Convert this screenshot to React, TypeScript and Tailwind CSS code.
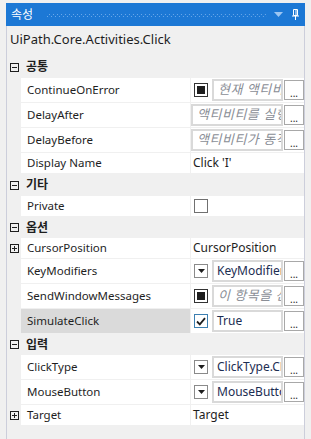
import React from "react";

type Check = "mixed" | "checked" | "empty";

type Prop = {
  name: string;
  kind: "checkText" | "text" | "plain" | "checkbox" | "drop";
  value?: string;
  placeholder?: string;
  check?: Check;
  expander?: boolean;
  selected?: boolean;
};

type Group = { title: string; h: string; props: Prop[] };

const groups: Group[] = [
  {
    title: "공통",
    h: "h-[22px]",
    props: [
      { name: "ContinueOnError", kind: "checkText", check: "mixed", placeholder: "현재 액티비티가 실패해도" },
      { name: "DelayAfter", kind: "text", placeholder: "액티비티를 실행한 후 지연 시간" },
      { name: "DelayBefore", kind: "text", placeholder: "액티비티가 동작을 시작하기 전" },
      { name: "Display Name", kind: "plain", value: "Click 'I'" },
    ],
  },
  {
    title: "기타",
    h: "h-[22px]",
    props: [{ name: "Private", kind: "checkbox", check: "empty" }],
  },
  {
    title: "옵션",
    h: "h-[21px]",
    props: [
      { name: "CursorPosition", kind: "plain", value: "CursorPosition", expander: true },
      { name: "KeyModifiers", kind: "drop", value: "KeyModifiers" },
      { name: "SendWindowMessages", kind: "checkText", check: "mixed", placeholder: "이 항목을 선택하면" },
      { name: "SimulateClick", kind: "checkText", check: "checked", value: "True", selected: true },
    ],
  },
  {
    title: "입력",
    h: "h-[21px]",
    props: [
      { name: "ClickType", kind: "drop", value: "ClickType.CLICK_SINGLE" },
      { name: "MouseButton", kind: "drop", value: "MouseButton.BTN_LEFT" },
      { name: "Target", kind: "plain", value: "Target", expander: true },
    ],
  },
];

function BoxIcon({ plus }: { plus?: boolean }) {
  return (
    <svg width="9" height="9" viewBox="0 0 9 9" className="block">
      <rect x="0.5" y="0.5" width="8" height="8" fill="none" stroke="#1e1e1e" />
      <line x1="2" y1="4.5" x2="7" y2="4.5" stroke="#1e1e1e" />
      {plus && <line x1="4.5" y1="2" x2="4.5" y2="7" stroke="#1e1e1e" />}
    </svg>
  );
}

function CheckBox({ state }: { state: Check }) {
  return (
    <div
      className={
        "flex h-[14px] w-[14px] shrink-0 items-center justify-center border bg-white " +
        (state === "checked" ? "border-[#3c7fb1]" : state === "mixed" ? "border-[#333333]" : "border-[#707070]")
      }
    >
      {state === "mixed" && <div className="h-[8px] w-[8px] bg-[#1e1e1e]" />}
      {state === "checked" && (
        <svg width="10" height="9" viewBox="0 0 10 9">
          <path d="M1 4.5 L3.8 7.3 L9 1.2" fill="none" stroke="#1e1e1e" strokeWidth="1.8" />
        </svg>
      )}
    </div>
  );
}

function DropBtn() {
  return (
    <div className="flex h-[14px] w-[14px] shrink-0 items-center justify-center border border-[#8a8a8a] bg-white">
      <svg width="7" height="4" viewBox="0 0 7 4">
        <path d="M0 0 H7 L3.5 4 Z" fill="#1e1e1e" />
      </svg>
    </div>
  );
}

function TextBox({ value, placeholder, wide }: { value?: string; placeholder?: string; wide?: boolean }) {
  return (
    <div
      className={
        "flex h-[22px] items-center overflow-hidden whitespace-nowrap border-2 border-[#d9d9d9] bg-white pl-[3px] " +
        (wide ? "w-[92px]" : "w-[71px]")
      }
    >
      {value ? (
        <span className="text-[12px] text-[#1c2d52]">{value}</span>
      ) : (
        <span className="pl-[1px] text-[13px] italic tracking-[0.5px] text-[#8a8e96]">{placeholder}</span>
      )}
    </div>
  );
}

function Ellipsis() {
  return (
    <div className="ml-[1px] flex h-[20px] w-[20px] shrink-0 items-end justify-center border border-[#a8a8a8] bg-white pb-[1px] text-[10px] leading-[10px] text-[#1e1e1e]">
      ...
    </div>
  );
}

function Value({ p }: { p: Prop }) {
  if (p.kind === "plain") {
    return <span className="pl-[2px] text-[12px] text-[#1e1e1e]">{p.value}</span>;
  }
  if (p.kind === "checkbox") {
    return (
      <div className="pl-[3px]">
        <CheckBox state={p.check ?? "empty"} />
      </div>
    );
  }
  if (p.kind === "text") {
    return (
      <div className="flex items-center">
        <TextBox placeholder={p.placeholder} value={p.value} wide />
        <Ellipsis />
      </div>
    );
  }
  return (
    <div className="flex items-center pl-[3px]">
      {p.kind === "drop" ? <DropBtn /> : <CheckBox state={p.check ?? "empty"} />}
      <div className="ml-[4px]">
        <TextBox placeholder={p.placeholder} value={p.value} />
      </div>
      <Ellipsis />
    </div>
  );
}

function PropRow({ p }: { p: Prop }) {
  const tall = p.kind !== "plain" && p.kind !== "checkbox";
  return (
    <div className={"flex " + (tall ? "h-[25px]" : "h-[21px]")}>
      <div className="flex w-[14px] shrink-0 items-center justify-center">{p.expander && <BoxIcon plus />}</div>
      <div
        className={
          "flex w-[170px] shrink-0 items-center border-b border-r border-[#f0f0f0] pl-[6px] text-[11.5px] text-[#1e1e1e] " +
          (p.selected ? "bg-[#dadada]" : "bg-white")
        }
      >
        {p.name}
      </div>
      <div className="flex w-[113px] shrink-0 items-center border-b border-[#f0f0f0] bg-white">
        <Value p={p} />
      </div>
    </div>
  );
}

function CategoryRow({ title, h }: { title: string; h: string }) {
  return (
    <div className={"flex items-center " + h}>
      <div className="flex w-[14px] shrink-0 items-center justify-center">
        <BoxIcon />
      </div>
      <span className="pl-[5px] text-[12px] font-bold text-[#1e1e1e]">{title}</span>
    </div>
  );
}

export default function App() {
  return (
    <div className="h-[439px] w-[311px] overflow-hidden bg-[#f0f0f0] pt-[3px] font-['Noto_Sans','Noto_Sans_CJK_KR',sans-serif]">
      <div className="ml-[6px] w-[299px]">
        <div className="flex h-[23px] items-center bg-[#1c78d5] pl-[5px] pr-[6px]">
          <span className="text-[12px] text-white">속성</span>
          <svg className="ml-[14px] flex-1" height="6" viewBox="0 0 220 6" preserveAspectRatio="none">
            <defs>
              <pattern id="dots" width="4" height="4" patternUnits="userSpaceOnUse">
                <rect x="0" y="0" width="1" height="1" fill="#6aa8ea" />
                <rect x="2" y="2" width="1" height="1" fill="#6aa8ea" />
              </pattern>
            </defs>
            <rect x="0" y="1" width="220" height="4" fill="url(#dots)" />
          </svg>
          <svg className="ml-[7px]" width="9" height="5" viewBox="0 0 9 5">
            <path d="M0 0 H9 L4.5 5 Z" fill="#9cc6f2" />
          </svg>
          <svg className="ml-[9px]" width="7" height="11" viewBox="0 0 7 11">
            <path d="M1.5 0.5 H5.5 V6.5 H1.5 Z" fill="none" stroke="#ffffff" />
            <line x1="4" y1="1" x2="4" y2="6" stroke="#ffffff" />
            <line x1="0" y1="7" x2="7" y2="7" stroke="#ffffff" />
            <line x1="3.5" y1="7" x2="3.5" y2="11" stroke="#ffffff" />
          </svg>
        </div>
        <div className="h-[420px] border-x border-[#cccedb]">
          <div className="h-[30px] pl-[3px] pt-[4px] text-[13px] leading-[18px] text-[#1e1e1e]">
            UiPath.Core.Activities.Click
          </div>
          {groups.map((g) => (
            <div key={g.title}>
              <CategoryRow title={g.title} h={g.h} />
              {g.props.map((p) => (
                <PropRow key={p.name} p={p} />
              ))}
            </div>
          ))}
        </div>
      </div>
    </div>
  );
}
